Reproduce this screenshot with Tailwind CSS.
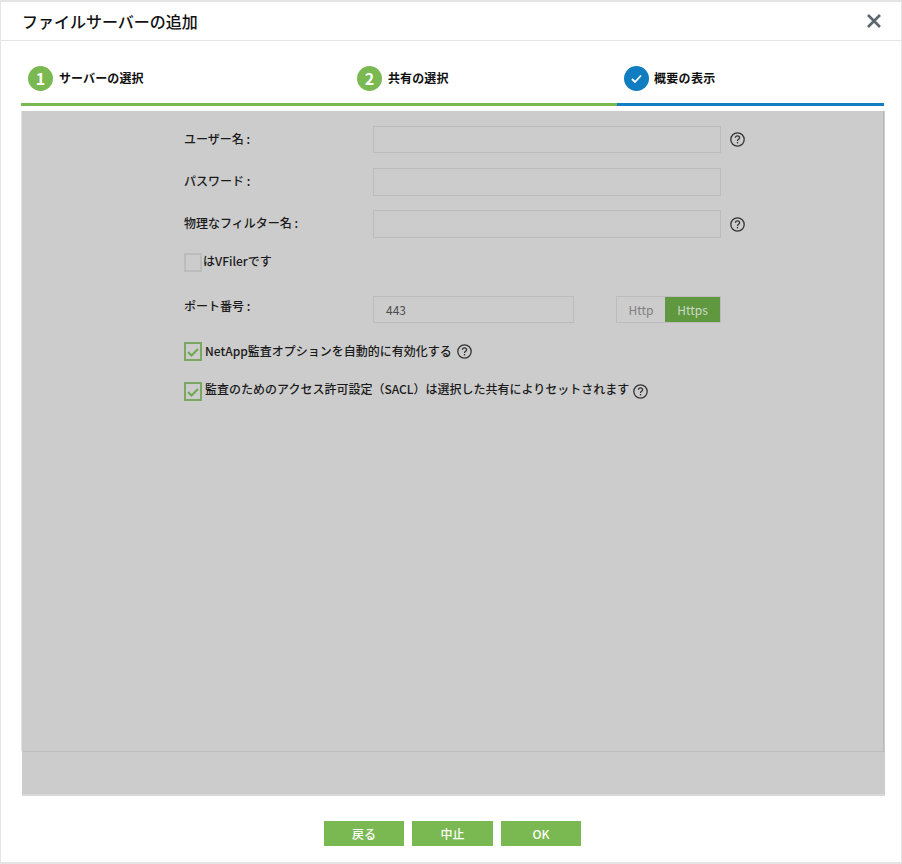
<!DOCTYPE html>
<html lang="ja">
<head>
<meta charset="utf-8">
<script src="https://cdn.jsdelivr.net/npm/@tailwindcss/browser@4"></script>
</head>
<body class="bg-white font-['Noto_Sans_CJK_JP','Noto_Sans',sans-serif]">
<div class="w-[902px] h-[864px] border border-[#e4e4e4] border-t-2 border-b-2 bg-white flex flex-col text-[#222] overflow-hidden">
  <header class="h-[39px] shrink-0 border-b-[1px] border-[#e4e4e4] flex items-center justify-between pl-[21px] pr-[19px]">
    <h1 class="text-[16px] font-medium leading-none text-[#111]">ファイルサーバーの追加</h1>
    <svg class="w-[16px] h-[16px]" viewBox="0 0 16 16" fill="none" stroke="#5b6670" stroke-width="2.6"><path d="M2 2l12 12M14 2L2 14"/></svg>
  </header>

  <div class="h-[65px] w-[863px] shrink-0 ml-[20px] flex border-b-[3px] border-[#7ab951] relative">
    <div class="w-[329px] flex items-center pt-[12px]">
      <span class="w-[25px] h-[25px] ml-[7px] rounded-full bg-[#7ab951] text-white text-[16px] font-bold flex items-center justify-center">1</span>
      <span class="ml-[6px] text-[12px] font-bold tracking-[0.1px] text-[#111]">サーバーの選択</span>
    </div>
    <div class="w-[267px] flex items-center pt-[12px]">
      <span class="w-[25px] h-[25px] ml-[7px] rounded-full bg-[#7ab951] text-white text-[16px] font-bold flex items-center justify-center">2</span>
      <span class="ml-[6px] text-[12px] font-bold tracking-[0.1px] text-[#111]">共有の選択</span>
    </div>
    <div class="flex-1 flex items-center pt-[12px] relative">
      <span class="w-[25px] h-[25px] ml-[7px] rounded-full bg-[#0f7dc0] flex items-center justify-center">
        <svg class="w-[13px] h-[13px]" viewBox="0 0 13 13" fill="none" stroke="#fff" stroke-width="1.8"><path d="M2 7l3 3 6-6.5"/></svg>
      </span>
      <span class="ml-[5px] text-[12px] font-bold tracking-[0.3px] text-[#111]">概要の表示</span>
      <div class="absolute left-0 right-0 bottom-[-3px] h-[3px] bg-[#0f7dc0]"></div>
    </div>
  </div>

  <div class="ml-[21px] mt-[5px] w-[863px] shrink-0 bg-[#cccccc]">
    <main class="-ml-[1px] w-[863px] h-[640px] bg-[#cccccc] border-r border-[#b8b8b8] border-l border-l-[#e0e0e0] pt-[15px] pl-[162px] text-[12px] font-medium text-[#1a1a1a]">
      <div class="flex items-center h-[27px]">
        <label class="w-[189px] pb-[2px]">ユーザー名 :</label>
        <div class="w-[348px] h-[27px] border border-[#bcbcbc]"></div>
        <svg class="ml-[9px] w-[15px] h-[15px]" viewBox="0 0 15 15" fill="none" stroke="#333"><circle cx="7.5" cy="7.5" r="6.7" stroke-width="1.3"/><path d="M5.4 5.8c0-1.3 1-2 2.1-2s2.1.7 2.1 1.9c0 1.5-2.1 1.6-2.1 3.2" stroke-width="1.3"/><path d="M7.5 10v1.4" stroke-width="1.3"/></svg>
      </div>
      <div class="flex items-center h-[28px] mt-[15px]">
        <label class="w-[189px] pb-[3px]">パスワード :</label>
        <div class="w-[348px] h-[28px] border border-[#bcbcbc]"></div>
      </div>
      <div class="flex items-center h-[28px] mt-[14px]">
        <label class="w-[189px] pb-[3px]">物理なフィルター名 :</label>
        <div class="w-[348px] h-[28px] border border-[#bcbcbc]"></div>
        <svg class="ml-[9px] w-[15px] h-[15px]" viewBox="0 0 15 15" fill="none" stroke="#333"><circle cx="7.5" cy="7.5" r="6.7" stroke-width="1.3"/><path d="M5.4 5.8c0-1.3 1-2 2.1-2s2.1.7 2.1 1.9c0 1.5-2.1 1.6-2.1 3.2" stroke-width="1.3"/><path d="M7.5 10v1.4" stroke-width="1.3"/></svg>
      </div>
      <div class="flex items-center mt-[15px] h-[19px]">
        <span class="w-[18px] h-[19px] border-2 border-[#bcbcbc]"></span>
        <span class="ml-[1px] pb-[4px]">はVFilerです</span>
      </div>
      <div class="flex items-center mt-[24px] h-[27px]">
        <label class="w-[189px] pb-[8px]">ポート番号 :</label>
        <div class="w-[201px] h-[27px] border border-[#bcbcbc] pl-[12px] flex items-center text-[12px] font-normal text-[#4d4d4d]">443</div>
        <div class="ml-[42px] w-[105px] h-[27px] border border-[#bcbcbc] flex text-[12px] font-normal">
          <span class="w-[48px] flex items-center justify-center text-[#808080]">Http</span>
          <span class="flex-1 flex items-center justify-center bg-[#5f983e] text-[#cfd8c8]">Https</span>
        </div>
      </div>
      <div class="flex items-center mt-[19px] h-[19px]">
        <span class="w-[18px] h-[19px] border-2 border-[#7aa860] flex items-center justify-center">
          <svg class="w-[12px] h-[12px]" viewBox="0 0 12 12" fill="none" stroke="#6fa850" stroke-width="2"><path d="M1 6l3.5 3.5L11 3"/></svg>
        </span>
        <span class="ml-[3px] pb-[2px]">NetApp監査オプションを自動的に有効化する</span>
        <svg class="ml-[5px] w-[15px] h-[15px]" viewBox="0 0 15 15" fill="none" stroke="#333"><circle cx="7.5" cy="7.5" r="6.7" stroke-width="1.3"/><path d="M5.4 5.8c0-1.3 1-2 2.1-2s2.1.7 2.1 1.9c0 1.5-2.1 1.6-2.1 3.2" stroke-width="1.3"/><path d="M7.5 10v1.4" stroke-width="1.3"/></svg>
      </div>
      <div class="flex items-center mt-[21px] h-[19px]">
        <span class="w-[18px] h-[19px] border-2 border-[#7aa860] flex items-center justify-center">
          <svg class="w-[12px] h-[12px]" viewBox="0 0 12 12" fill="none" stroke="#6fa850" stroke-width="2"><path d="M1 6l3.5 3.5L11 3"/></svg>
        </span>
        <span class="ml-[3px] pb-[5px]">監査のためのアクセス許可設定（SACL）は選択した共有によりセットされます</span>
        <svg class="ml-[4px] w-[15px] h-[15px]" viewBox="0 0 15 15" fill="none" stroke="#333"><circle cx="7.5" cy="7.5" r="6.7" stroke-width="1.3"/><path d="M5.4 5.8c0-1.3 1-2 2.1-2s2.1.7 2.1 1.9c0 1.5-2.1 1.6-2.1 3.2" stroke-width="1.3"/><path d="M7.5 10v1.4" stroke-width="1.3"/></svg>
      </div>
    </main>
    <div class="h-[45px] border-t border-t-[#bfbfbf] border-b-2 border-b-[#d8d8d8] w-[863px]"></div>
  </div>

  <footer class="mt-[25px] flex gap-[8px] pl-[323px]">
    <button class="w-[80px] h-[25px] bg-[#7ab951] text-white text-[12px] font-medium">戻る</button>
    <button class="w-[81px] h-[25px] bg-[#7ab951] text-white text-[12px] font-medium">中止</button>
    <button class="w-[80px] h-[25px] bg-[#7ab951] text-white text-[12px] font-medium">OK</button>
  </footer>
</div>
</body>
</html>
